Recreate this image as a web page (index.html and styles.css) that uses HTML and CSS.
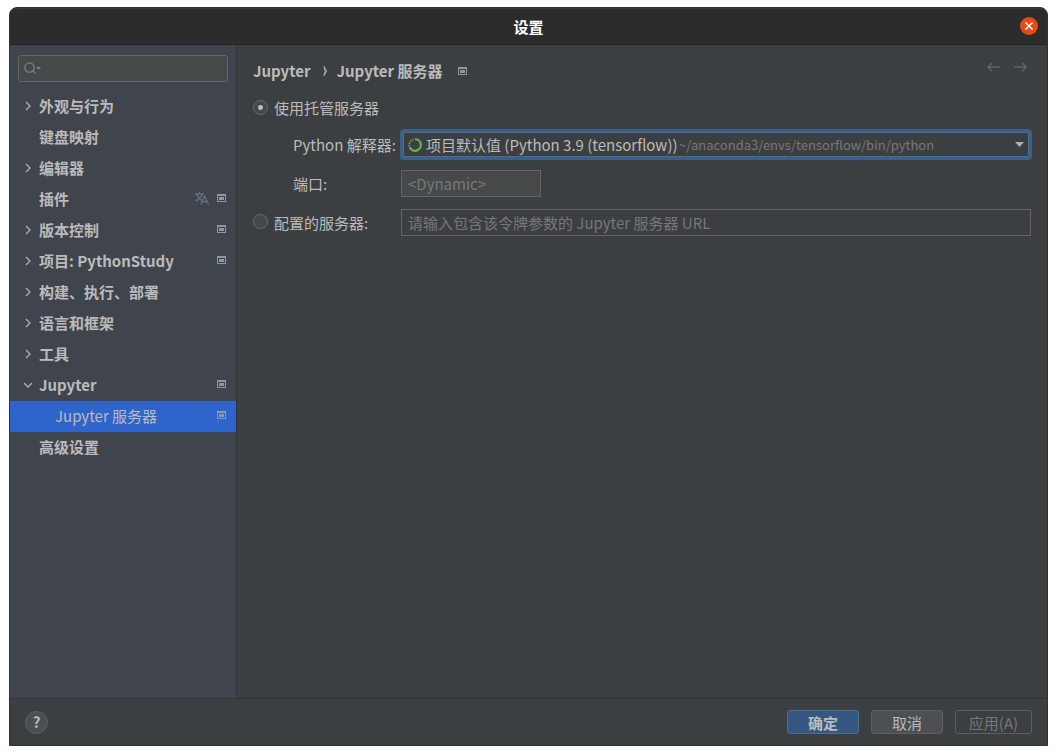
FILE: index.html
```html
<!DOCTYPE html>
<html lang="zh-CN">
<head>
<meta charset="utf-8">
<title>设置</title>
<link rel="stylesheet" href="styles.css">
</head>
<body>
<svg class="defs" aria-hidden="true">
  <symbol id="right" viewBox="0 0 10 10"><path d="M3 1l4 4-4 4" fill="none" stroke="#adb0b3" stroke-width="1.3"/></symbol>
  <symbol id="down" viewBox="0 0 10 10"><path d="M1 3l4 4 4-4" fill="none" stroke="#adb0b3" stroke-width="1.3"/></symbol>
  <symbol id="project" viewBox="0 0 9 8"><path d="M0 0h9v8H0zM1 2v5h7V2z" fill="#8b99a3" fill-rule="evenodd"/><path d="M2 3h5v3H2z" fill="#8b99a3"/></symbol>
</svg>
<div class="window">
  <header class="titlebar">
    <h1 class="title">设置</h1>
    <button class="close" aria-label="关闭"><svg width="18" height="18" viewBox="0 0 18 18"><path d="M5.5 5.5l7 7m0-7l-7 7" stroke="#fff" stroke-width="1.5"/></svg></button>
  </header>
  <div class="content">
    <aside class="sidebar">
      <label class="search">
        <svg width="18" height="16" viewBox="0 0 18 16" fill="none" stroke="#7f858c" stroke-width="1.2"><circle cx="5.500" cy="6.500" r="4.700"/><path d="M8.800 9.800l3 3"/><path d="M12 6h5l-2.500 2.500z" fill="#7f858c" stroke="none"/></svg>
        <input class="search-input" type="text" aria-label="搜索设置">
      </label>
      <nav class="tree">
        <a class="row" href="#"><svg class="arrow"><use href="#right"/></svg><span class="name">外观与行为</span></a>
        <a class="row" href="#"><span class="arrow"></span><span class="name">键盘映射</span></a>
        <a class="row" href="#"><svg class="arrow"><use href="#right"/></svg><span class="name">编辑器</span></a>
        <a class="row" href="#"><span class="arrow"></span><span class="name">插件</span><svg class="lang" width="14" height="13" viewBox="0 0 14 13" fill="none" stroke="#65707b" stroke-width="1.400"><path d="M0 2h9M4.500 0v2M2 2.500c1 3 3 5 5 6M7 2.500c-1 3-3.500 5.500-6.500 6.500M6 12.500l3.500-8.500 4 8.500M7.500 9.500h4.500"/></svg><svg class="badge"><use href="#project"/></svg></a>
        <a class="row" href="#"><svg class="arrow"><use href="#right"/></svg><span class="name">版本控制</span><svg class="badge"><use href="#project"/></svg></a>
        <a class="row" href="#"><svg class="arrow"><use href="#right"/></svg><span class="name">项目: PythonStudy</span><svg class="badge"><use href="#project"/></svg></a>
        <a class="row" href="#"><svg class="arrow"><use href="#right"/></svg><span class="name">构建、执行、部署</span></a>
        <a class="row" href="#"><svg class="arrow"><use href="#right"/></svg><span class="name">语言和框架</span></a>
        <a class="row" href="#"><svg class="arrow"><use href="#right"/></svg><span class="name">工具</span></a>
        <a class="row" href="#"><svg class="arrow"><use href="#down"/></svg><span class="name">Jupyter</span><svg class="badge"><use href="#project"/></svg></a>
        <a class="row child selected" href="#" aria-current="page"><span class="name">Jupyter 服务器</span><svg class="badge"><use href="#project"/></svg></a>
        <a class="row" href="#"><span class="arrow"></span><span class="name">高级设置</span></a>
      </nav>
    </aside>
    <main class="main">
      <div class="crumbs">
        <a class="crumb" href="#">Jupyter</a>
        <svg class="sep" width="5" height="10" viewBox="0 0 5 10"><path d="M1 0.500q2.500 4.500 0 9M1 0.500l2.500 4.500-2.500 4.500" fill="none" stroke="#bbb"/></svg>
        <span class="crumb">Jupyter 服务器</span>
        <svg class="badge"><use href="#project"/></svg>
        <div class="history">
          <button class="nav" aria-label="后退" disabled><svg width="13" height="10" viewBox="0 0 13 10"><path d="M13 5H1M5 0.700L1 5l4 4.300" fill="none" stroke="#5f6162" stroke-width="1.600"/></svg></button>
          <button class="nav" aria-label="前进" disabled><svg width="13" height="10" viewBox="0 0 13 10"><path d="M0 5h12M8 0.700L12 5 8 9.300" fill="none" stroke="#5f6162" stroke-width="1.600"/></svg></button>
        </div>
      </div>
      <form class="form">
        <label class="option"><input class="radio" type="radio" name="server" checked>使用托管服务器</label>
        <label class="label indent" for="python">Python 解释器:</label>
        <div class="combo">
          <select class="select" id="python"><option>项目默认值 (Python 3.9 (tensorflow))</option></select>
          <div class="overlay">
            <svg class="ring" width="14" height="14" viewBox="0 0 14 14" fill="none" stroke="#62b543" stroke-width="2.200"><path d="M7 1.200A5.800 5.800 0 1 1 1.700 9.300"/><path d="M1.400 8.300A5.800 5.800 0 0 1 6 1.300" stroke-width="1.500" stroke-dasharray="1.500 .8"/></svg>
            <span class="path">~/anaconda3/envs/tensorflow/bin/python</span>
            <svg class="caret" width="9" height="5" viewBox="0 0 9 5"><path d="M0 0h9L4.500 5z" fill="#adb0b3"/></svg>
          </div>
        </div>
        <label class="label indent" for="port">端口:</label>
        <input class="field port" id="port" type="text" placeholder="&lt;Dynamic&gt;">
        <label class="configured"><input class="radio" type="radio" name="server">配置的服务器:</label>
        <input class="field" type="text" aria-label="服务器 URL" placeholder="请输入包含该令牌参数的 Jupyter 服务器 URL">
      </form>
    </main>
  </div>
  <footer class="footer">
    <button class="help" aria-label="帮助">?</button>
    <button class="button primary">确定</button>
    <button class="button">取消</button>
    <button class="button apply" disabled>应用(A)</button>
  </footer>
</div>
</body>
</html>
```
FILE: styles.css
```css
* { box-sizing: border-box; }
body {
  margin: 0;
  padding: 7px 9px 9px;
  height: 100vh;
  background: #fff;
  color: #bbb;
  font: 15px/22px "Noto Sans CJK SC", "Noto Sans", sans-serif;
}
input, select, button { font: inherit; color: inherit; margin: 0; }
a { color: inherit; text-decoration: none; }
svg { display: block; flex: none; }
.defs { position: absolute; width: 0; height: 0; }
.window {
  height: 100%;
  display: flex;
  flex-direction: column;
  background: #3c3f41;
  border: 1px solid #303132;
  border-radius: 8px 8px 0 0;
  overflow: hidden;
}
.titlebar {
  height: 37px;
  flex: none;
  display: grid;
  grid-template-columns: 1fr auto 1fr;
  align-items: center;
  padding: 0 9px;
  background: #2c2c2c;
  border-bottom: 1px solid #232323;
  box-shadow: inset 0 1px #3b3b3b;
}
.title { grid-column: 2; margin: 2px 0 0; font-size: 15px; font-weight: 700; color: #fff; }
.close { justify-self: end; width: 18px; height: 18px; padding: 0; border: 0; border-radius: 50%; background: #e64a17; }
.content { flex: 1; min-height: 0; display: flex; }
.sidebar { width: 227px; flex: none; background: #40444c; border-right: 1px solid #313335; padding-top: 10px; }
.search {
  display: flex;
  align-items: center;
  height: 27px;
  margin: 0 8px 9px;
  padding-left: 5px;
  background: #45494a;
  border: 1px solid #646464;
  border-radius: 3px;
}
.search-input { flex: 1; min-width: 0; border: 0; background: none; outline: none; }
.row { display: flex; align-items: center; height: 31px; padding: 0 10px 2px 13px; font-weight: 700; }
.arrow { width: 10px; height: 10px; margin-right: 6px; flex: none; }
.name { flex: 1; white-space: nowrap; }
.badge { width: 9px; height: 8px; margin-bottom: 2px; }
.lang { margin-right: 8px; }
.child { padding-left: 45px; font-weight: 400; }
.selected { background: #2f65ca; }
.main { flex: 1; min-width: 0; padding: 15px 16px; }
.crumbs { display: flex; align-items: center; height: 22px; }
.crumb { font-weight: 700; }
.sep { margin: 0 9px 0 12px; }
.crumbs .badge { margin: 0 0 0 16px; }
.history { display: flex; gap: 14px; margin: 0 4px 8px auto; }
.nav { padding: 0; border: 0; background: none; }
.form { display: grid; grid-template-columns: 148px 1fr; align-items: center; margin-top: 15px; }
.option { grid-column: 1 / -1; height: 22px; }
.option, .configured { display: flex; align-items: center; gap: 6px; white-space: nowrap; }
.radio {
  appearance: none;
  width: 15px;
  height: 15px;
  margin-bottom: 2px;
  border: 1px solid #6b6b6b;
  border-radius: 50%;
  background: #43494a;
}
.radio:checked { background: radial-gradient(circle, #bbb 2px, #43494a 3px); }
.indent { padding-left: 40px; white-space: nowrap; }
.combo { display: grid; margin: 10px -1px; border: 3px solid #3d6185; border-radius: 4px; box-shadow: inset 0 0 0 1px #466d94; }
.select {
  grid-area: 1 / 1;
  appearance: none;
  width: 100%;
  height: 25px;
  padding: 0 20px 0 23px;
  border: 0;
  background: none;
  outline: none;
}
.overlay { grid-area: 1 / 1; display: flex; align-items: center; padding: 0 5px; pointer-events: none; }
.path { margin-left: 257px; padding-top: 1px; font-size: 13px; color: #787878; white-space: nowrap; }
.caret { margin-left: auto; }
.field {
  width: 100%;
  height: 27px;
  padding: 0 6px;
  border: 1px solid #646464;
  background: none;
  outline: none;
}
.field::placeholder { color: #777; opacity: 1; }
.port { width: 140px; background: #45494a; }
.configured { height: 51px; }
.footer { height: 47px; flex: none; display: flex; align-items: center; gap: 12px; padding: 0 15px; border-top: 1px solid #313335; }
.help { width: 23px; height: 23px; margin-right: auto; padding: 0; border: 1px solid #5e6060; border-radius: 50%; background: #4c5052; font-weight: 700; line-height: 20px; }
.button { width: 72px; height: 24px; padding: 1px 0 0; border: 1px solid #5e6060; border-radius: 3px; background: #4c5052; }
.primary { background: #365880; border-color: #4c708c; font-weight: 700; }
.apply { width: 77px; background: none; color: #777; }
```
